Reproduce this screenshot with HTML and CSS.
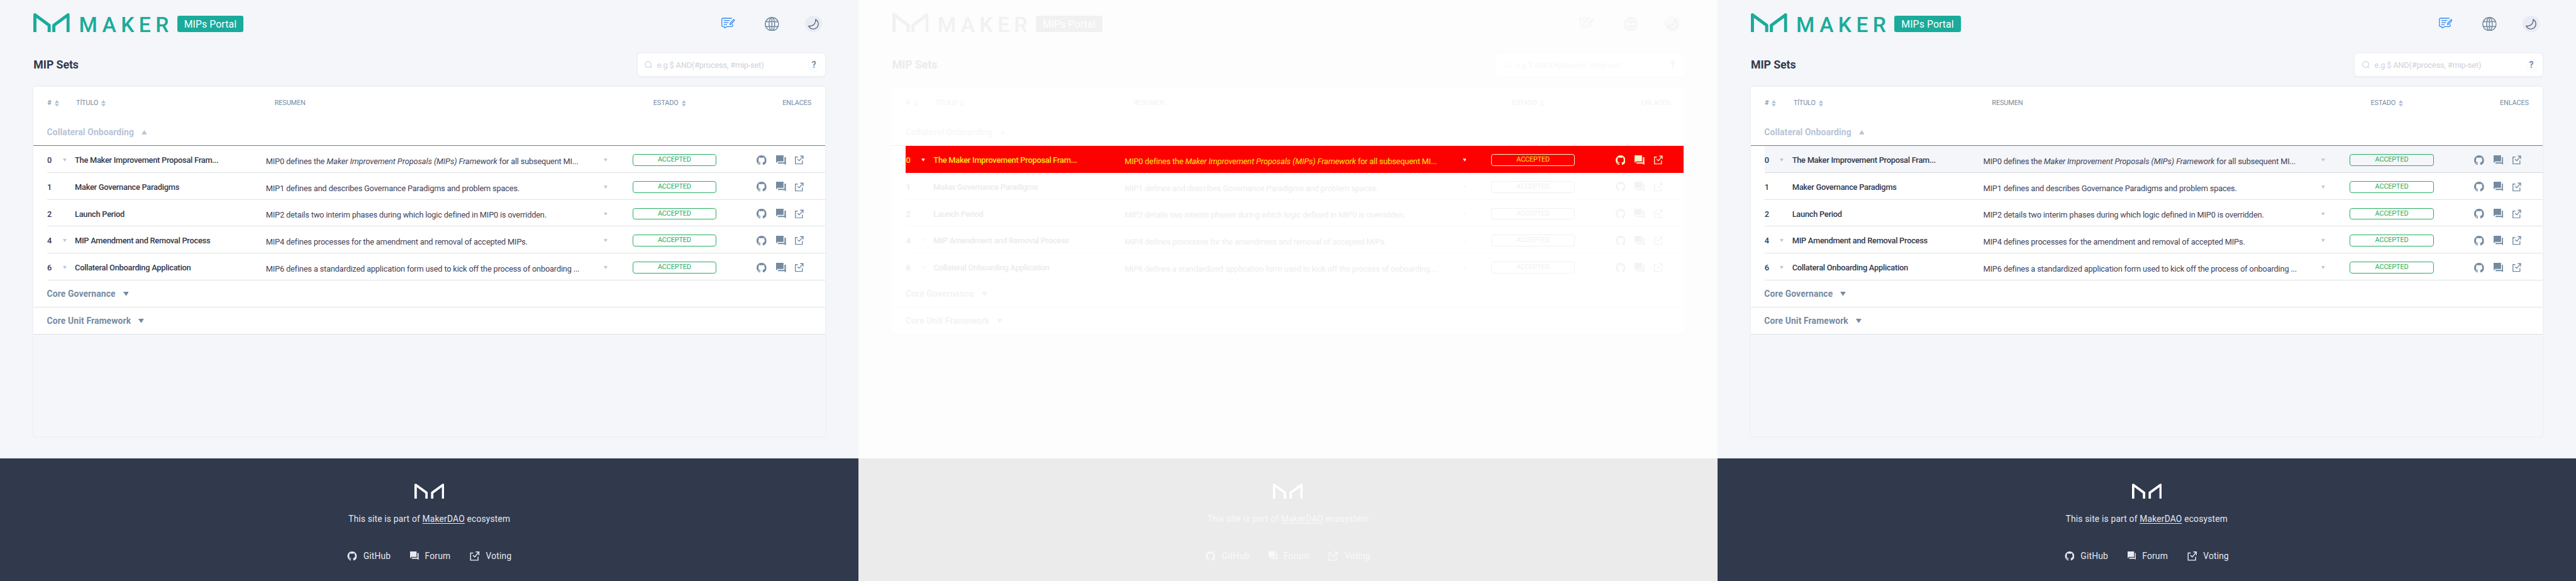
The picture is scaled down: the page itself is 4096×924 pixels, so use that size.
FILE: index.html
```html
<!DOCTYPE html>
<html lang="es">
<head>
<meta charset="utf-8">
<title>MIPs Portal</title>
<link rel="stylesheet" href="styles.css">
</head>
<body>
<svg class="defs" aria-hidden="true">
  <symbol id="logo" viewBox="0 0 58.5 31"><path d="M2.5 31V2.6L25.5 19.5V31M56 31V2.6L33 19.5V31" fill="none" stroke="currentColor" stroke-width="5" stroke-linejoin="round"/></symbol>
  <symbol id="mark" viewBox="0 0 48 25"><path d="M1.9 25V2.1L19.4 14.8V25M46.1 25V2.1L28.6 14.8V25" fill="none" stroke="currentColor" stroke-width="3.8" stroke-linejoin="round"/></symbol>
  <symbol id="edit" viewBox="0 0 22 18"><path d="M16.5 1H3Q.8 1 .8 3V12.500Q.8 14.500 3 14.500H4.500L5.500 17L9 14.500H16Q18.300 14.500 18.300 12.500V11M4.500 4.700H13M4.500 8H11M4.500 11.300H8.500M13.800 11.300L14.500 8.600L19.500 3.200Q20.700 2.800 21.200 4.300L16.200 10.200Z" fill="none" stroke="currentColor" stroke-width="1.3" stroke-linejoin="round" stroke-linecap="round"/></symbol>
  <symbol id="globe" viewBox="0 0 23 23"><g fill="none" stroke="currentColor" stroke-width="1.5"><circle cx="11.500" cy="11.500" r="10.700"/><ellipse cx="11.500" cy="11.500" rx="4.500" ry="10.700"/><path d="M1.500 7.500H21.500M1.500 15.500H21.500M11.500 1V22"/></g></symbol>
  <symbol id="moon" viewBox="0 0 27 27"><path d="M17 6Q21.800 9 21.400 14Q20.500 20.500 14 21.400Q8.300 21.600 5.800 16.500Q11.500 17.500 14.600 14Q17.600 10.500 17 6Z" fill="none" stroke="currentColor" stroke-width="1.4" stroke-linejoin="round"/></symbol>
  <symbol id="find" viewBox="0 0 12 12"><path d="M9 9L11.500 11.500" stroke="currentColor"/><circle cx="5.600" cy="5.600" r="4.900" fill="none" stroke="currentColor"/></symbol>
  <symbol id="sort" viewBox="0 0 7 11"><path d="M0 5L3.500 0L7 5ZM0 6.300H7L3.500 11Z" fill="currentColor"/></symbol>
  <symbol id="down" viewBox="0 0 8 6"><path d="M0 0H8L4 6Z" fill="currentColor"/></symbol>
  <symbol id="up" viewBox="0 0 8 6"><path d="M0 6H8L4 0Z" fill="currentColor"/></symbol>
  <symbol id="github" viewBox="0 0 16 16"><path fill="currentColor" d="M8 0C3.580 0 0 3.580 0 8c0 3.540 2.290 6.530 5.470 7.590.4.070.55-.17.55-.38 0-.19-.01-.82-.01-1.490-2.010.37-2.530-.49-2.690-.94-.09-.23-.48-.94-.82-1.130-.28-.15-.68-.52-.01-.53.63-.01 1.080.58 1.230.82.72 1.210 1.870.87 2.330.66.07-.52.28-.87.51-1.070-1.780-.2-3.640-.89-3.640-3.950 0-.87.31-1.590.82-2.150-.08-.2-.36-1.020.08-2.120 0 0 .67-.21 2.200.82.64-.18 1.320-.27 2-.27s1.360.09 2 .27c1.530-1.040 2.200-.82 2.200-.82.44 1.100.16 1.920.08 2.120.51.56.82 1.270.82 2.150 0 3.070-1.870 3.750-3.650 3.950.29.25.54.73.54 1.480 0 1.070-.01 1.930-.01 2.200 0 .21.15.46.55.38A8.010 8.010 0 0 0 16 8c0-4.420-3.580-8-8-8z"/></symbol>
  <symbol id="forum" viewBox="0 0 16 16"><path fill="currentColor" d="M0 0H12V10H2.500L0 12.400ZM13.500 3H16V16L13.300 13.500H3V11.500H13.500Z"/></symbol>
  <symbol id="vote" viewBox="0 0 15 15"><path d="M5 2.500H.8V14.200H12.800V8.500M9 .8H14.200V6M14 1L7.500 8.800L4.500 6.200" fill="none" stroke="currentColor" stroke-width="1.5"/></symbol>
</svg>

<div class="board">

<section class="panel">
  <header class="topbar">
    <svg class="logo"><use href="#logo"/></svg><span class="wordmark">MAKER</span><span class="portal">MIPs Portal</span>
    <nav class="tools"><svg class="i-edit"><use href="#edit"/></svg><svg class="i-globe"><use href="#globe"/></svg><span class="i-moon"><svg><use href="#moon"/></svg></span></nav>
  </header>
  <div class="titlebar"><h1>MIP Sets</h1><div class="search"><svg><use href="#find"/></svg><span>e.g $ AND(#process, #mip-set)</span><b>?</b></div></div>
  <main class="card">
    <div class="thead"><span class="h-num"># <svg><use href="#sort"/></svg></span><span class="h-title">TÍTULO <svg><use href="#sort"/></svg></span><span class="h-desc">RESUMEN</span><span class="h-state">ESTADO <svg><use href="#sort"/></svg></span><span class="h-links">ENLACES</span></div>
    <div class="group open">Collateral Onboarding<svg><use href="#up"/></svg></div>
    <div class="row"><span class="num">0</span><svg class="caret"><use href="#down"/></svg><span class="title">The Maker Improvement Proposal Fram...</span><span class="desc">MIP0 defines the <em>Maker Improvement Proposals (MIPs) Framework</em> for all subsequent MI...</span><svg class="caret"><use href="#down"/></svg><span class="badge">ACCEPTED</span><span class="links"><svg><use href="#github"/></svg><svg><use href="#forum"/></svg><svg class="v"><use href="#vote"/></svg></span></div>
    <div class="row"><span class="num">1</span><i></i><span class="title">Maker Governance Paradigms</span><span class="desc">MIP1 defines and describes Governance Paradigms and problem spaces.</span><svg class="caret"><use href="#down"/></svg><span class="badge">ACCEPTED</span><span class="links"><svg><use href="#github"/></svg><svg><use href="#forum"/></svg><svg class="v"><use href="#vote"/></svg></span></div>
    <div class="row"><span class="num">2</span><i></i><span class="title">Launch Period</span><span class="desc">MIP2 details two interim phases during which logic defined in MIP0 is overridden.</span><svg class="caret"><use href="#down"/></svg><span class="badge">ACCEPTED</span><span class="links"><svg><use href="#github"/></svg><svg><use href="#forum"/></svg><svg class="v"><use href="#vote"/></svg></span></div>
    <div class="row"><span class="num">4</span><svg class="caret"><use href="#down"/></svg><span class="title">MIP Amendment and Removal Process</span><span class="desc">MIP4 defines processes for the amendment and removal of accepted MIPs.</span><svg class="caret"><use href="#down"/></svg><span class="badge">ACCEPTED</span><span class="links"><svg><use href="#github"/></svg><svg><use href="#forum"/></svg><svg class="v"><use href="#vote"/></svg></span></div>
    <div class="row"><span class="num">6</span><svg class="caret"><use href="#down"/></svg><span class="title">Collateral Onboarding Application</span><span class="desc">MIP6 defines a standardized application form used to kick off the process of onboarding ...</span><svg class="caret"><use href="#down"/></svg><span class="badge">ACCEPTED</span><span class="links"><svg><use href="#github"/></svg><svg><use href="#forum"/></svg><svg class="v"><use href="#vote"/></svg></span></div>
    <div class="group">Core Governance<svg><use href="#down"/></svg></div>
    <div class="group">Core Unit Framework<svg><use href="#down"/></svg></div>
  </main>
  <footer class="foot">
    <svg class="mark"><use href="#mark"/></svg>
    <p>This site is part of <a>MakerDAO</a> ecosystem</p>
    <div class="flinks"><span><svg><use href="#github"/></svg>GitHub</span><span><svg class="f"><use href="#forum"/></svg>Forum</span><span><svg><use href="#vote"/></svg>Voting</span></div>
  </footer>
</section>

<section class="panel diff">
  <header class="topbar">
    <svg class="logo"><use href="#logo"/></svg><span class="wordmark">MAKER</span><span class="portal">MIPs Portal</span>
    <nav class="tools"><svg class="i-edit"><use href="#edit"/></svg><svg class="i-globe"><use href="#globe"/></svg><span class="i-moon"><svg><use href="#moon"/></svg></span></nav>
  </header>
  <div class="titlebar"><h1>MIP Sets</h1><div class="search"><svg><use href="#find"/></svg><span>e.g $ AND(#process, #mip-set)</span><b>?</b></div></div>
  <main class="card">
    <div class="thead"><span class="h-num"># <svg><use href="#sort"/></svg></span><span class="h-title">TÍTULO <svg><use href="#sort"/></svg></span><span class="h-desc">RESUMEN</span><span class="h-state">ESTADO <svg><use href="#sort"/></svg></span><span class="h-links">ENLACES</span></div>
    <div class="group open">Collateral Onboarding<svg><use href="#up"/></svg></div>
    <div class="row changed"><span class="num">0</span><svg class="caret"><use href="#down"/></svg><span class="title">The Maker Improvement Proposal Fram...</span><span class="desc">MIP0 defines the <em>Maker Improvement Proposals (MIPs) Framework</em> for all subsequent MI...</span><svg class="caret"><use href="#down"/></svg><span class="badge">ACCEPTED</span><span class="links"><svg><use href="#github"/></svg><svg><use href="#forum"/></svg><svg class="v"><use href="#vote"/></svg></span></div>
    <div class="row"><span class="num">1</span><i></i><span class="title">Maker Governance Paradigms</span><span class="desc">MIP1 defines and describes Governance Paradigms and problem spaces.</span><svg class="caret"><use href="#down"/></svg><span class="badge">ACCEPTED</span><span class="links"><svg><use href="#github"/></svg><svg><use href="#forum"/></svg><svg class="v"><use href="#vote"/></svg></span></div>
    <div class="row"><span class="num">2</span><i></i><span class="title">Launch Period</span><span class="desc">MIP2 details two interim phases during which logic defined in MIP0 is overridden.</span><svg class="caret"><use href="#down"/></svg><span class="badge">ACCEPTED</span><span class="links"><svg><use href="#github"/></svg><svg><use href="#forum"/></svg><svg class="v"><use href="#vote"/></svg></span></div>
    <div class="row"><span class="num">4</span><svg class="caret"><use href="#down"/></svg><span class="title">MIP Amendment and Removal Process</span><span class="desc">MIP4 defines processes for the amendment and removal of accepted MIPs.</span><svg class="caret"><use href="#down"/></svg><span class="badge">ACCEPTED</span><span class="links"><svg><use href="#github"/></svg><svg><use href="#forum"/></svg><svg class="v"><use href="#vote"/></svg></span></div>
    <div class="row"><span class="num">6</span><svg class="caret"><use href="#down"/></svg><span class="title">Collateral Onboarding Application</span><span class="desc">MIP6 defines a standardized application form used to kick off the process of onboarding ...</span><svg class="caret"><use href="#down"/></svg><span class="badge">ACCEPTED</span><span class="links"><svg><use href="#github"/></svg><svg><use href="#forum"/></svg><svg class="v"><use href="#vote"/></svg></span></div>
    <div class="group">Core Governance<svg><use href="#down"/></svg></div>
    <div class="group">Core Unit Framework<svg><use href="#down"/></svg></div>
  </main>
  <footer class="foot">
    <svg class="mark"><use href="#mark"/></svg>
    <p>This site is part of <a>MakerDAO</a> ecosystem</p>
    <div class="flinks"><span><svg><use href="#github"/></svg>GitHub</span><span><svg class="f"><use href="#forum"/></svg>Forum</span><span><svg><use href="#vote"/></svg>Voting</span></div>
  </footer>
</section>

<section class="panel">
  <header class="topbar">
    <svg class="logo"><use href="#logo"/></svg><span class="wordmark">MAKER</span><span class="portal">MIPs Portal</span>
    <nav class="tools"><svg class="i-edit"><use href="#edit"/></svg><svg class="i-globe"><use href="#globe"/></svg><span class="i-moon"><svg><use href="#moon"/></svg></span></nav>
  </header>
  <div class="titlebar"><h1>MIP Sets</h1><div class="search"><svg><use href="#find"/></svg><span>e.g $ AND(#process, #mip-set)</span><b>?</b></div></div>
  <main class="card">
    <div class="thead"><span class="h-num"># <svg><use href="#sort"/></svg></span><span class="h-title">TÍTULO <svg><use href="#sort"/></svg></span><span class="h-desc">RESUMEN</span><span class="h-state">ESTADO <svg><use href="#sort"/></svg></span><span class="h-links">ENLACES</span></div>
    <div class="group open">Collateral Onboarding<svg><use href="#up"/></svg></div>
    <div class="row hover"><span class="num">0</span><svg class="caret"><use href="#down"/></svg><span class="title">The Maker Improvement Proposal Fram...</span><span class="desc">MIP0 defines the <em>Maker Improvement Proposals (MIPs) Framework</em> for all subsequent MI...</span><svg class="caret"><use href="#down"/></svg><span class="badge">ACCEPTED</span><span class="links"><svg><use href="#github"/></svg><svg><use href="#forum"/></svg><svg class="v"><use href="#vote"/></svg></span></div>
    <div class="row"><span class="num">1</span><i></i><span class="title">Maker Governance Paradigms</span><span class="desc">MIP1 defines and describes Governance Paradigms and problem spaces.</span><svg class="caret"><use href="#down"/></svg><span class="badge">ACCEPTED</span><span class="links"><svg><use href="#github"/></svg><svg><use href="#forum"/></svg><svg class="v"><use href="#vote"/></svg></span></div>
    <div class="row"><span class="num">2</span><i></i><span class="title">Launch Period</span><span class="desc">MIP2 details two interim phases during which logic defined in MIP0 is overridden.</span><svg class="caret"><use href="#down"/></svg><span class="badge">ACCEPTED</span><span class="links"><svg><use href="#github"/></svg><svg><use href="#forum"/></svg><svg class="v"><use href="#vote"/></svg></span></div>
    <div class="row"><span class="num">4</span><svg class="caret"><use href="#down"/></svg><span class="title">MIP Amendment and Removal Process</span><span class="desc">MIP4 defines processes for the amendment and removal of accepted MIPs.</span><svg class="caret"><use href="#down"/></svg><span class="badge">ACCEPTED</span><span class="links"><svg><use href="#github"/></svg><svg><use href="#forum"/></svg><svg class="v"><use href="#vote"/></svg></span></div>
    <div class="row"><span class="num">6</span><svg class="caret"><use href="#down"/></svg><span class="title">Collateral Onboarding Application</span><span class="desc">MIP6 defines a standardized application form used to kick off the process of onboarding ...</span><svg class="caret"><use href="#down"/></svg><span class="badge">ACCEPTED</span><span class="links"><svg><use href="#github"/></svg><svg><use href="#forum"/></svg><svg class="v"><use href="#vote"/></svg></span></div>
    <div class="group">Core Governance<svg><use href="#down"/></svg></div>
    <div class="group">Core Unit Framework<svg><use href="#down"/></svg></div>
  </main>
  <footer class="foot">
    <svg class="mark"><use href="#mark"/></svg>
    <p>This site is part of <a>MakerDAO</a> ecosystem</p>
    <div class="flinks"><span><svg><use href="#github"/></svg>GitHub</span><span><svg class="f"><use href="#forum"/></svg>Forum</span><span><svg><use href="#vote"/></svg>Voting</span></div>
  </footer>
</section>

</div>
</body>
</html>
```
FILE: styles.css
```css
* { box-sizing: border-box; margin: 0; padding: 0; }
html, body { overflow: hidden; }
body { font-family: Roboto, "Liberation Sans", sans-serif; background: #f4f6fa; }
svg { display: block; flex: none; }
.defs { display: none; }

.board { display: flex; width: 4146px; height: 936px; zoom: 0.98794; }

.panel {
  --bg: #f4f6fa; --card: #fff; --teal: #1aab9b; --ink: #31394d; --text: #434358;
  --slate: #748aa1; --muted: #b6c4d6; --line: #dfe1e3; --rule: #6a7d94;
  --ok: #27ae60; --blue: #3388f0; --circle: #e9ecf3; --hint: #cfd1d8; --moon: #5a6785;
  --foot: #31394d; --foottext: #e6e9f0; --mark: #fff; --shadow: rgba(60, 70, 120, .08);
  display: flex; flex-direction: column; flex: none;
  width: 1382px; height: 936px; background: var(--bg); color: var(--ink);
}
.diff {
  --bg: #fdfdfd; --card: #fff; --teal: #f1f1f1; --ink: #ebebeb; --text: #ededed;
  --slate: #f3f3f3; --muted: #f8f8f8; --line: #fafafa; --rule: #f0f0f0;
  --ok: #f1f1f1; --blue: #f2f2f2; --circle: #fafafa; --hint: #f8f8f8; --moon: #eeeeee;
  --foot: #ebebeb; --foottext: #f9f9f9; --mark: #fff; --shadow: rgba(0, 0, 0, .015);
}

.topbar { display: flex; align-items: flex-end; height: 52px; padding: 0 59px 0 54px; color: var(--teal); }
.logo { width: 58.5px; height: 31px; }
.wordmark { margin-left: 14.500px; width: 156px; font-size: 34px; font-weight: 500; line-height: 24px; letter-spacing: 7.500px; }
.portal { display: flex; align-items: center; justify-content: center; margin-left: 2px; width: 107px; height: 27px; padding-top: 1px; border-radius: 3px; background: var(--teal); color: #fff; font-size: 16px; letter-spacing: .1px; }
.tools { display: flex; align-items: flex-end; margin-left: auto; }
.i-edit { width: 22px; height: 18px; margin: 0 48px 6px 0; color: var(--blue); }
.i-globe { width: 23px; height: 23px; margin: 0 42px 2px 0; color: var(--slate); }
.i-moon { width: 27px; height: 27px; border-radius: 50%; background: var(--circle); color: var(--moon); }
.i-moon svg { width: 27px; height: 27px; }

.titlebar { display: flex; align-items: center; justify-content: space-between; height: 36px; margin: 34px 54px 18px; }
h1 { font-size: 18px; font-weight: 700; letter-spacing: -.1px; }
.search { display: flex; align-items: center; width: 302px; height: 36px; padding: 1px 10px 0 12px; border-radius: 5px; background: var(--card); box-shadow: 0 1px 4px var(--shadow); color: var(--hint); font-size: 13px; letter-spacing: -.2px; }
.search svg { width: 12px; height: 12px; margin-right: 7.5px; color: var(--muted); }
.search b { display: flex; align-items: center; justify-content: center; width: 16px; height: 17px; margin-left: auto; border-radius: 50%; box-shadow: 0 1px 3px var(--shadow); color: var(--slate); font-size: 14px; }

.card { flex: none; height: 562px; margin: 0 54px; box-shadow: 0 0 4px var(--shadow); }
.thead { display: grid; grid-template-columns: 46.500px 319.500px 609.500px 208px 1fr; align-items: center; height: 50px; padding: 2px 0 0 22px; background: var(--card); color: var(--slate); font-size: 11px; letter-spacing: -.1px; }
.thead span { display: flex; align-items: center; gap: 5px; }
.thead svg { width: 7px; height: 11px; color: var(--muted); }

.group { display: flex; align-items: center; gap: 12px; height: 43.700px; padding: 0 22px 0 21.500px; border-bottom: 1px solid var(--line); background: var(--card); color: var(--slate); font-size: 14px; font-weight: 700; letter-spacing: .15px; }
.group svg { width: 9px; height: 7px; margin-top: 1px; }
.open { height: 45px; padding-top: 1.500px; border-color: var(--rule); color: var(--muted); }

.row { display: grid; grid-template-columns: 25px 19.500px 307.500px 544px 46px 200px 1fr; align-items: center; height: 43.300px; padding-top: 3px; background: var(--card); border-bottom: 1px solid var(--line); font-size: 13px; letter-spacing: -.2px; white-space: nowrap; margin-left: 22px; box-shadow: -22px 0 0 var(--card); }
.num, .title { font-weight: 500; }
.title { letter-spacing: -.26px; }
.desc { padding-top: 4px; color: var(--text); }
.desc em { letter-spacing: -.09px; }
.caret { width: 6px; height: 5px; color: var(--muted); }
.badge { width: 135px; height: 19px; border: 1px solid var(--ok); border-radius: 4px; color: var(--ok); font-size: 11px; line-height: 17px; text-align: center; letter-spacing: -.15px; }
.links { display: flex; align-items: center; color: var(--slate); }
.links svg { width: 16px; height: 16px; margin-right: 15px; }
.links .v { width: 14px; height: 15px; margin: 0; }
.hover { background: #f4f6fa; border-color: #d4d7dc; }
.changed { --ink: #f8e81c; --text: #f8e81c; --muted: #fff; --slate: #f2f2c8; background: #f00; border-color: #f00; color: #f8e81c; }
.changed .badge { border-color: #f4f4d0; color: #f8e81c; }

.foot { flex: 1; display: flex; flex-direction: column; align-items: center; margin-top: 36px; padding-top: 40px; background: var(--foot); color: var(--foottext); font-size: 14px; letter-spacing: .18px; }
.mark { width: 48px; height: 25px; color: var(--mark); }
.foot p { margin-top: 23px; line-height: 20px; }
.foot a { text-decoration: underline; text-underline-offset: 2px; }
.flinks { display: flex; gap: 31px; margin-top: 41px; }
.flinks span { display: flex; align-items: center; gap: 10px; height: 16px; }
.flinks svg { width: 16px; height: 15px; }
.flinks .f { width: 14px; height: 14px; }
```
